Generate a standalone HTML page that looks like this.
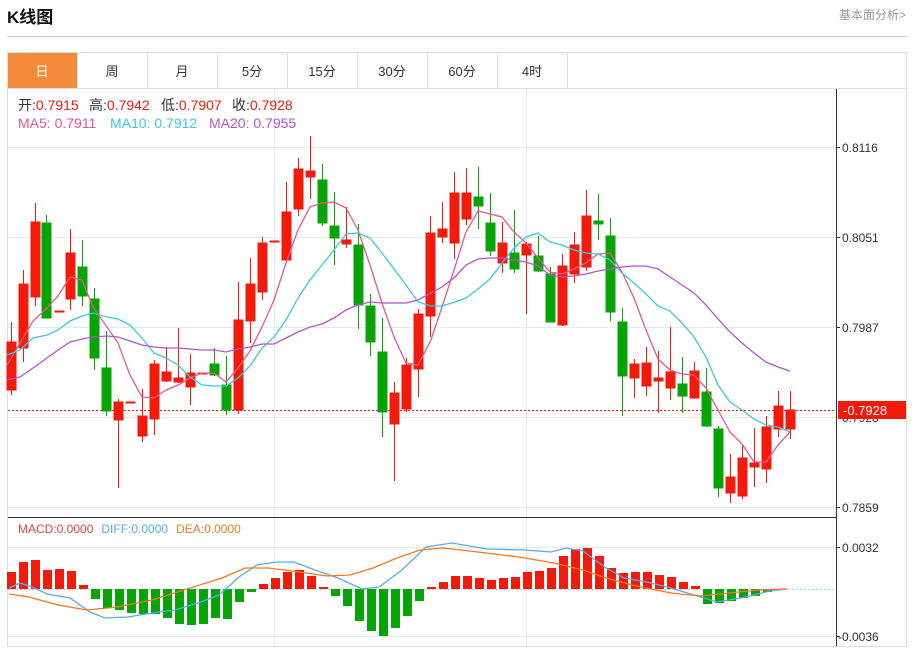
<!DOCTYPE html>
<html><head><meta charset="utf-8"><style>
html,body{margin:0;padding:0;background:#fff;width:914px;height:648px;overflow:hidden;font-family:"Liberation Sans","Noto Sans CJK SC",sans-serif}
svg{position:absolute;left:0;top:0}
</style></head><body>
<svg width="914" height="648" viewBox="0 0 914 648" xmlns="http://www.w3.org/2000/svg" font-family="Liberation Sans, Noto Sans CJK SC, sans-serif">
<text x="7" y="23" font-size="17" font-weight="bold" fill="#111">K线图</text>
<text x="906" y="19" font-size="12" fill="#999" text-anchor="end">基本面分析&gt;</text>
<line x1="7" y1="36.5" x2="907" y2="36.5" stroke="#ccc"/>
<rect x="7.5" y="52.5" width="899" height="594" fill="none" stroke="#ddd"/>
<rect x="8" y="53" width="69" height="35" fill="#f28c3c"/>
<g stroke="#ddd"><line x1="77.5" y1="53" x2="77.5" y2="88"/><line x1="147.5" y1="53" x2="147.5" y2="88"/><line x1="217.5" y1="53" x2="217.5" y2="88"/><line x1="287.5" y1="53" x2="287.5" y2="88"/><line x1="357.5" y1="53" x2="357.5" y2="88"/><line x1="427.5" y1="53" x2="427.5" y2="88"/><line x1="497.5" y1="53" x2="497.5" y2="88"/><line x1="567.5" y1="53" x2="567.5" y2="88"/><line x1="8" y1="88.5" x2="906" y2="88.5"/></g>
<g font-size="13" text-anchor="middle" fill="#333"><text x="42" y="76" fill="#fff">日</text><text x="112" y="76">周</text><text x="182" y="76">月</text><text x="252" y="76">5分</text><text x="322" y="76">15分</text><text x="392" y="76">30分</text><text x="462" y="76">60分</text><text x="532" y="76">4时</text></g>
<!-- grid -->
<g stroke="#e3eaf0"><line x1="8" y1="147.5" x2="836" y2="147.5"/><line x1="8" y1="237.5" x2="836" y2="237.5"/><line x1="8" y1="327.5" x2="836" y2="327.5"/><line x1="8" y1="417.5" x2="836" y2="417.5"/><line x1="8" y1="507.5" x2="836" y2="507.5"/><line x1="274.5" y1="89" x2="274.5" y2="646"/><line x1="526.5" y1="89" x2="526.5" y2="646"/><line x1="8" y1="547.5" x2="836" y2="547.5"/><line x1="8" y1="636.5" x2="836" y2="636.5"/></g>
<g font-size="14" fill="#333">
<text x="18" y="110">开:<tspan fill="#f21a0a">0.7915</tspan></text>
<text x="89" y="110">高:<tspan fill="#f21a0a">0.7942</tspan></text>
<text x="161" y="110">低:<tspan fill="#f21a0a">0.7907</tspan></text>
<text x="232" y="110">收:<tspan fill="#f21a0a">0.7928</tspan></text>
<text x="18" y="128" fill="#e9588a">MA5: 0.7911</text>
<text x="110" y="128" fill="#3cc8dc">MA10: 0.7912</text>
<text x="209" y="128" fill="#b455c8">MA20: 0.7955</text>
</g>
<line x1="8" y1="410.5" x2="836" y2="410.5" stroke="#f21a0a" stroke-dasharray="2,2"/>
<!-- candles -->
<g stroke="#f21a0a" fill="#f21a0a" stroke-width="1">
<line x1="11.5" y1="322" x2="11.5" y2="395"/><rect x="7" y="342" width="9" height="48"/>
<line x1="23.5" y1="270" x2="23.5" y2="362"/><rect x="19" y="284" width="9" height="64"/>
<line x1="35.5" y1="203" x2="35.5" y2="306"/><rect x="31" y="222" width="9" height="75"/>
<rect x="55" y="311" width="9" height="1"/>
<line x1="70.5" y1="229" x2="70.5" y2="310"/><rect x="66" y="253" width="9" height="46"/>
<line x1="118.5" y1="399" x2="118.5" y2="488"/><rect x="114" y="402" width="9" height="18"/>
<rect x="126" y="402" width="9" height="1"/>
<line x1="142.5" y1="389" x2="142.5" y2="442"/><rect x="138" y="416" width="9" height="20"/>
<line x1="154.5" y1="360" x2="154.5" y2="435"/><rect x="150" y="364" width="9" height="55"/>
<line x1="166.5" y1="347" x2="166.5" y2="382"/><rect x="162" y="372" width="9" height="9"/>
<line x1="178.5" y1="328" x2="178.5" y2="383"/><rect x="174" y="378" width="9" height="4"/>
<line x1="190.5" y1="354" x2="190.5" y2="405"/><rect x="186" y="373" width="9" height="14"/>
<rect x="198" y="373" width="9" height="1"/>
<line x1="238.5" y1="282" x2="238.5" y2="414"/><rect x="234" y="320" width="9" height="90"/>
<line x1="250.5" y1="258" x2="250.5" y2="343"/><rect x="246" y="284" width="9" height="37"/>
<line x1="262.5" y1="237" x2="262.5" y2="300"/><rect x="258" y="243" width="9" height="49"/>
<rect x="270" y="241" width="9" height="1"/>
<line x1="286.5" y1="182" x2="286.5" y2="261"/><rect x="282" y="212" width="9" height="48"/>
<line x1="298.5" y1="158" x2="298.5" y2="216"/><rect x="294" y="169" width="9" height="40"/>
<line x1="310.5" y1="136" x2="310.5" y2="199"/><rect x="306" y="171" width="9" height="6"/>
<line x1="346.5" y1="207" x2="346.5" y2="248"/><rect x="342" y="240" width="9" height="4"/>
<line x1="394.5" y1="382" x2="394.5" y2="481"/><rect x="390" y="393" width="9" height="31"/>
<line x1="406.5" y1="358" x2="406.5" y2="412"/><rect x="402" y="365" width="9" height="44"/>
<line x1="418.5" y1="309" x2="418.5" y2="397"/><rect x="414" y="314" width="9" height="55"/>
<line x1="430.5" y1="216" x2="430.5" y2="337"/><rect x="426" y="233" width="9" height="83"/>
<line x1="442.5" y1="202" x2="442.5" y2="243"/><rect x="438" y="229" width="9" height="8"/>
<line x1="454.5" y1="172" x2="454.5" y2="259"/><rect x="450" y="193" width="9" height="50"/>
<line x1="466.5" y1="168" x2="466.5" y2="225"/><rect x="462" y="193" width="9" height="26"/>
<line x1="502.5" y1="222" x2="502.5" y2="273"/><rect x="498" y="243" width="9" height="20"/>
<line x1="526.5" y1="242" x2="526.5" y2="314"/><rect x="522" y="244" width="9" height="11"/>
<line x1="562.5" y1="254" x2="562.5" y2="326"/><rect x="558" y="266" width="9" height="59"/>
<line x1="574.5" y1="232" x2="574.5" y2="283"/><rect x="570" y="245" width="9" height="29"/>
<line x1="586.5" y1="190" x2="586.5" y2="271"/><rect x="582" y="216" width="9" height="51"/>
<line x1="634.5" y1="359" x2="634.5" y2="398"/><rect x="630" y="364" width="9" height="14"/>
<line x1="646.5" y1="347" x2="646.5" y2="396"/><rect x="642" y="363" width="9" height="23"/>
<line x1="658.5" y1="351" x2="658.5" y2="413"/><rect x="654" y="378" width="9" height="3"/>
<line x1="670.5" y1="327" x2="670.5" y2="400"/><rect x="666" y="372" width="9" height="16"/>
<line x1="694.5" y1="362" x2="694.5" y2="399"/><rect x="690" y="371" width="9" height="27"/>
<line x1="730.5" y1="454" x2="730.5" y2="503"/><rect x="726" y="477" width="9" height="16"/>
<line x1="742.5" y1="444" x2="742.5" y2="499"/><rect x="738" y="458" width="9" height="38"/>
<line x1="754.5" y1="428" x2="754.5" y2="487"/><rect x="750" y="463" width="9" height="4"/>
<line x1="766.5" y1="416" x2="766.5" y2="483"/><rect x="762" y="427" width="9" height="42"/>
<line x1="778.5" y1="391" x2="778.5" y2="437"/><rect x="774" y="406" width="9" height="23"/>
<line x1="790.5" y1="391" x2="790.5" y2="439"/><rect x="786" y="410" width="9" height="19"/>
</g>
<g stroke="#06a406" fill="#06a406">
<line x1="46.5" y1="215" x2="46.5" y2="318"/><rect x="42" y="223" width="9" height="95"/>
<line x1="82.5" y1="240" x2="82.5" y2="306"/><rect x="78" y="267" width="9" height="29"/>
<line x1="94.5" y1="288" x2="94.5" y2="370"/><rect x="90" y="299" width="9" height="59"/>
<line x1="106.5" y1="331" x2="106.5" y2="416"/><rect x="102" y="368" width="9" height="43"/>
<line x1="214.5" y1="348" x2="214.5" y2="376"/><rect x="210" y="364" width="9" height="11"/>
<line x1="226.5" y1="356" x2="226.5" y2="415"/><rect x="222" y="385" width="9" height="25"/>
<line x1="322.5" y1="164" x2="322.5" y2="226"/><rect x="318" y="180" width="9" height="43"/>
<line x1="334.5" y1="192" x2="334.5" y2="265"/><rect x="330" y="226" width="9" height="12"/>
<line x1="358.5" y1="224" x2="358.5" y2="329"/><rect x="354" y="245" width="9" height="60"/>
<line x1="370.5" y1="294" x2="370.5" y2="356"/><rect x="366" y="306" width="9" height="36"/>
<line x1="382.5" y1="318" x2="382.5" y2="437"/><rect x="378" y="352" width="9" height="60"/>
<line x1="478.5" y1="167" x2="478.5" y2="229"/><rect x="474" y="197" width="9" height="9"/>
<line x1="490.5" y1="193" x2="490.5" y2="256"/><rect x="486" y="223" width="9" height="28"/>
<line x1="514.5" y1="210" x2="514.5" y2="273"/><rect x="510" y="253" width="9" height="16"/>
<line x1="538.5" y1="236" x2="538.5" y2="272"/><rect x="534" y="256" width="9" height="15"/>
<line x1="550.5" y1="267" x2="550.5" y2="322"/><rect x="546" y="274" width="9" height="48"/>
<line x1="598.5" y1="194" x2="598.5" y2="240"/><rect x="594" y="221" width="9" height="3"/>
<line x1="610.5" y1="218" x2="610.5" y2="321"/><rect x="606" y="236" width="9" height="76"/>
<line x1="622.5" y1="308" x2="622.5" y2="416"/><rect x="618" y="322" width="9" height="54"/>
<line x1="682.5" y1="357" x2="682.5" y2="413"/><rect x="678" y="384" width="9" height="12"/>
<line x1="706.5" y1="368" x2="706.5" y2="427"/><rect x="702" y="392" width="9" height="34"/>
<line x1="718.5" y1="426" x2="718.5" y2="497"/><rect x="714" y="429" width="9" height="59"/>
</g>
<!-- MAs -->
<g fill="none" stroke-width="1.3">
<polyline stroke="#e9588a" points="7,365 33,321 47,308 58,296 70,277 82,280 93,307 118,343 130,375 142,397 154,398 166,390 178,385 190,378 202,373 214,373 226,382 238,368 250,351 262,327 274,300 286,263 298,230 310,207 322,203 334,202 346,208 358,230 370,265 382,303 394,337 406,363 418,365 431,340 442,307 455,267 466,232 478,211 490,214 502,217 514,232 526,243 538,258 550,272 562,274 574,269 586,263 598,254 610,253 622,272 634,298 646,330 658,359 670,370 682,374 694,375 706,388 718,410 730,432 742,444 754,462 766,462 778,445 790,432"/>
<polyline stroke="#3cc8dc" points="7,355 20,350 33,338 47,335 58,330 70,321 82,316 93,313 107,317 118,319 130,325 142,338 154,353 166,358 178,365 190,377 202,385 214,386 226,386 238,378 250,366 262,348 274,337 286,320 298,298 310,280 322,265 334,250 346,234 358,233 370,238 382,253 394,269 406,285 418,302 431,306 442,306 455,302 466,298 478,289 490,279 502,263 514,248 526,237 538,233 550,242 562,245 574,250 586,253 598,254 610,260 622,273 634,283 646,294 658,306 670,311 682,323 694,337 706,357 718,385 730,402 742,410 754,419 766,425 778,427 790,432"/>
<polyline stroke="#b455c8" points="7,380 20,377 33,368 47,358 58,350 70,342 82,339 93,337 107,336 118,337 130,341 142,345 154,347 166,348 178,348 190,349 202,350 214,350 226,352 238,349 250,347 262,344 274,344 286,338 298,332 310,327 322,324 334,318 346,310 358,305 370,302 382,303 394,303 406,303 418,300 431,293 442,287 455,277 466,265 478,259 490,258 502,258 514,260 526,262 538,266 550,275 562,277 574,276 586,274 598,271 610,269 622,267 634,266 646,266 658,269 670,277 682,285 694,293 706,305 718,319 730,332 742,343 754,353 766,362 778,367 790,371"/>
</g>
<!-- axis -->
<line x1="8" y1="517.5" x2="836" y2="517.5" stroke="#333"/>
<line x1="836.5" y1="89" x2="836.5" y2="646" stroke="#333"/>
<g stroke="#333"><line x1="836" y1="147.5" x2="840" y2="147.5"/><line x1="836" y1="237.5" x2="840" y2="237.5"/><line x1="836" y1="327.5" x2="840" y2="327.5"/><line x1="836" y1="507.5" x2="840" y2="507.5"/><line x1="836" y1="547.5" x2="840" y2="547.5"/><line x1="836" y1="636.5" x2="840" y2="636.5"/></g>
<g font-size="12" fill="#333"><text x="842" y="152">0.8116</text><text x="842" y="242">0.8051</text><text x="842" y="332">0.7987</text><text x="842" y="422">0.7928</text><text x="842" y="512">0.7859</text><text x="842" y="552">0.0032</text><text x="838" y="641">-0.0036</text></g>
<rect x="838" y="401" width="68" height="18" fill="#f21a0a"/>
<text x="843" y="415" font-size="13" fill="#fff">-0.7928</text>
<!-- MACD -->
<text x="18" y="533" font-size="12"><tspan fill="#f03c3c">MACD:0.0000</tspan><tspan fill="#5aabe8" dx="8">DIFF:0.0000</tspan><tspan fill="#f07a1f" dx="8">DEA:0.0000</tspan></text>
<line x1="8" y1="589.5" x2="836" y2="589.5" stroke="#9fd8ec" stroke-dasharray="2,2"/>
<g fill="#f21a0a">
<rect x="7" y="572" width="9" height="17"/><rect x="19" y="562" width="9" height="27"/><rect x="31" y="560" width="9" height="29"/><rect x="43" y="570" width="9" height="19"/><rect x="55" y="569" width="9" height="20"/><rect x="67" y="571" width="9" height="18"/><rect x="79" y="585" width="9" height="4"/>
<rect x="259" y="584" width="9" height="5"/><rect x="271" y="578" width="9" height="11"/><rect x="283" y="572" width="9" height="17"/><rect x="295" y="570" width="9" height="19"/><rect x="307" y="576" width="9" height="13"/><rect x="319" y="587" width="9" height="2"/>
<rect x="427" y="587" width="9" height="2"/><rect x="439" y="582" width="9" height="7"/><rect x="451" y="576" width="9" height="13"/><rect x="463" y="576" width="9" height="13"/><rect x="475" y="578" width="9" height="11"/><rect x="487" y="580" width="9" height="9"/><rect x="499" y="578" width="9" height="11"/><rect x="511" y="577" width="9" height="12"/><rect x="523" y="572" width="9" height="17"/><rect x="535" y="571" width="9" height="18"/><rect x="547" y="568" width="9" height="21"/><rect x="559" y="556" width="9" height="33"/><rect x="571" y="549" width="9" height="40"/><rect x="583" y="548" width="9" height="41"/><rect x="595" y="556" width="9" height="33"/><rect x="607" y="568" width="9" height="21"/><rect x="619" y="573" width="9" height="16"/><rect x="631" y="572" width="9" height="17"/><rect x="643" y="572" width="9" height="17"/><rect x="655" y="575" width="9" height="14"/><rect x="667" y="577" width="9" height="12"/><rect x="679" y="582" width="9" height="7"/><rect x="691" y="586" width="9" height="3"/>
</g>
<g fill="#06a406">
<rect x="91" y="589" width="9" height="10"/><rect x="103" y="589" width="9" height="19"/><rect x="115" y="589" width="9" height="21"/><rect x="127" y="589" width="9" height="24"/><rect x="139" y="589" width="9" height="25"/><rect x="151" y="589" width="9" height="25"/><rect x="163" y="589" width="9" height="29"/><rect x="175" y="589" width="9" height="35"/><rect x="187" y="589" width="9" height="36"/><rect x="199" y="589" width="9" height="35"/><rect x="211" y="589" width="9" height="29"/><rect x="223" y="589" width="9" height="30"/><rect x="235" y="589" width="9" height="13"/><rect x="247" y="589" width="9" height="3"/>
<rect x="331" y="589" width="9" height="7"/><rect x="343" y="589" width="9" height="17"/><rect x="355" y="589" width="9" height="32"/><rect x="367" y="589" width="9" height="42"/><rect x="379" y="589" width="9" height="47"/><rect x="391" y="589" width="9" height="39"/><rect x="403" y="589" width="9" height="27"/><rect x="415" y="589" width="9" height="12"/>
<rect x="703" y="589" width="9" height="15"/><rect x="715" y="589" width="9" height="14"/><rect x="727" y="589" width="9" height="12"/><rect x="739" y="589" width="9" height="9"/><rect x="751" y="589" width="9" height="7"/><rect x="763" y="589" width="9" height="3"/><rect x="775" y="589" width="9" height="1"/>
</g>
<g fill="none" stroke-width="1.3">
<polyline stroke="#5aabe8" points="9,588 20,583 32,587 47,594 70,598 90,612 105,618 128,617 152,613 175,610 198,603 219,595 239,577 257,565 277,562 294,562 315,570 338,578 362,589 379,587 402,570 426,547 452,543 487,549 525,550 551,552 566,548 583,551 606,568 624,578 647,582 671,588 694,595 717,602 746,597 770,591 787,589"/>
<polyline stroke="#f07a1f" points="9,594 29,597 58,605 87,610 117,607 152,600 187,589 222,578 245,568 268,568 292,571 327,576 350,575 373,568 397,558 420,550 443,548 478,552 519,557 554,563 583,570 606,578 636,586 671,593 700,596 729,593 758,590 787,589"/>
</g>
</svg>
</body></html>
